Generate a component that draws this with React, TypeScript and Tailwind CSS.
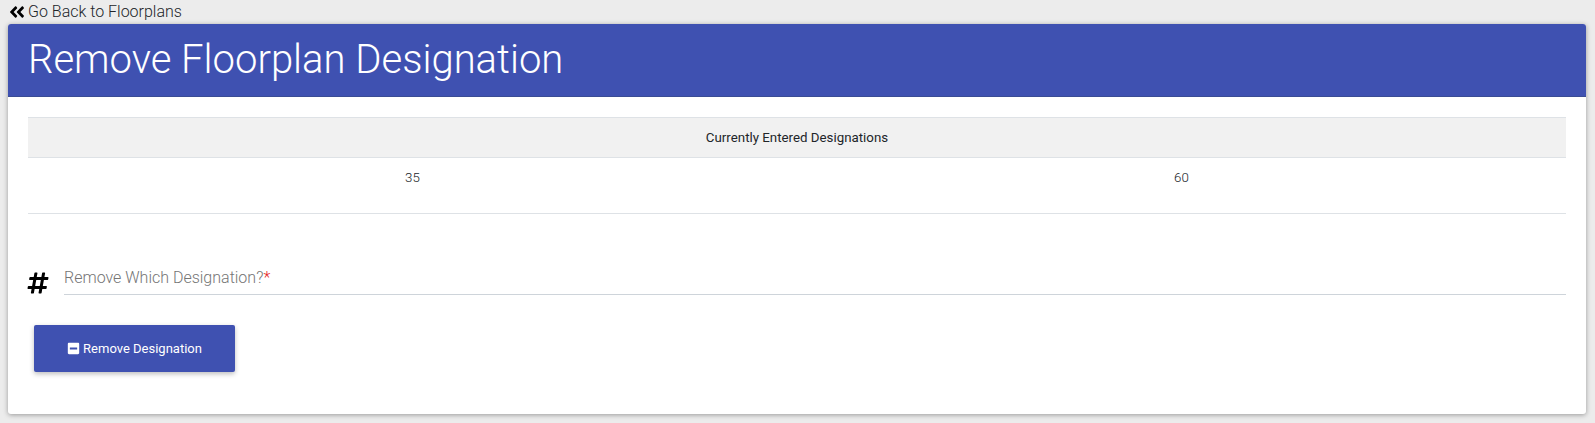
import { FaAngleDoubleLeft, FaHashtag, FaMinusSquare } from "react-icons/fa";

export default function App() {
  return (
    <div className="min-h-[423px] bg-[#ececec] px-2 font-['Roboto',sans-serif] text-[#212529]">
      <a className="flex h-6 items-center gap-[2px] text-base font-light leading-6">
        <FaAngleDoubleLeft className="text-[18px] text-black" />
        <span>Go Back to Floorplans</span>
      </a>

      <div className="h-[390px] w-[1578px] overflow-hidden rounded-[3px] bg-white shadow-[0_1px_5px_rgba(0,0,0,0.35)]">
        <div className="flex h-[73px] items-center border-b border-[#3a4c94] bg-[#3f51b1] px-5">
          <h1 className="text-[40px] font-light leading-[48px] text-white">
            Remove Floorplan Designation
          </h1>
        </div>

        <div className="px-5 pt-5">
          <div className="w-[1538px]">
            <div className="flex h-[41px] items-center justify-center border-y border-[#dee2e6] bg-[#f1f1f1] text-[13.3px] font-normal">
              Currently Entered Designations
            </div>
            <div className="grid h-[56px] grid-cols-2 border-b border-[#dee2e6] pt-[12px] text-center text-[13.3px] font-light leading-[16px]">
              <div>35</div>
              <div>60</div>
            </div>
          </div>

          <div className="mt-[52px] flex items-end">
            <div className="w-9">
              <FaHashtag className="-ml-[2px] text-[24px] text-black" />
            </div>
            <div className="flex h-[29px] w-[1502px] items-start border-b border-[#ced4da] text-base font-light leading-[24px] text-[#757575]">
              Remove Which Designation?<span className="text-[#e51c23]">*</span>
            </div>
          </div>

          <button className="ml-[6px] mt-[30px] flex h-[47px] w-[201px] items-center justify-center gap-[3px] rounded-[2px] bg-[#3f51b1] text-[13px] font-normal text-white shadow-[0_2px_5px_rgba(0,0,0,0.26)]">
            <FaMinusSquare className="text-[13px]" />
            Remove Designation
          </button>
        </div>
      </div>
    </div>
  );
}
